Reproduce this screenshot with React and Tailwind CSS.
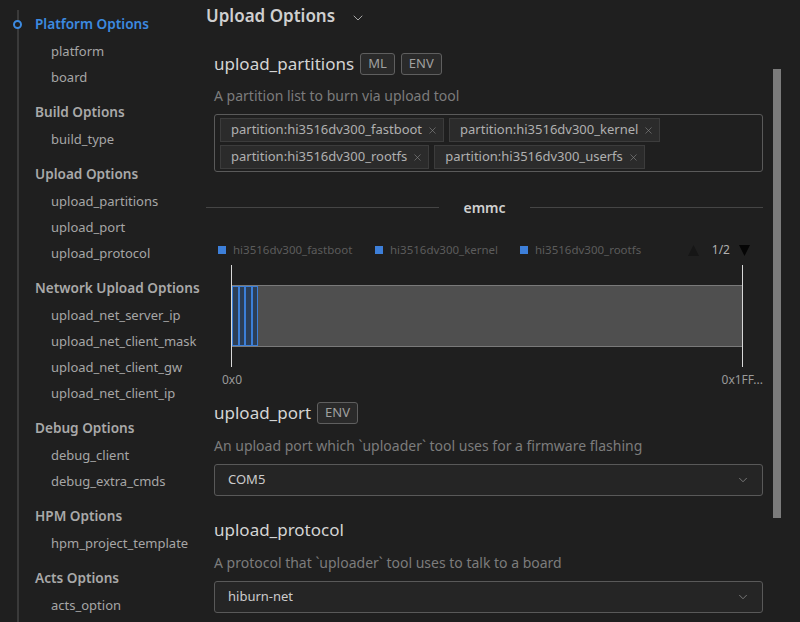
import React from "react";
import { ChevronDown, X } from "lucide-react";

const groups = [
  { title: "Platform Options", active: true, items: ["platform", "board"] },
  { title: "Build Options", items: ["build_type"] },
  { title: "Upload Options", items: ["upload_partitions", "upload_port", "upload_protocol"] },
  {
    title: "Network Upload Options",
    items: ["upload_net_server_ip", "upload_net_client_mask", "upload_net_client_gw", "upload_net_client_ip"],
  },
  { title: "Debug Options", items: ["debug_client", "debug_extra_cmds"] },
  { title: "HPM Options", items: ["hpm_project_template"] },
  { title: "Acts Options", items: ["acts_option"] },
];

const partitions = [
  ["partition:hi3516dv300_fastboot", "partition:hi3516dv300_kernel"],
  ["partition:hi3516dv300_rootfs", "partition:hi3516dv300_userfs"],
];

const legend = ["hi3516dv300_fastboot", "hi3516dv300_kernel", "hi3516dv300_rootfs"];

// Badge next to an option name
const Badge = ({ children }) => (
  <span className="h-[22px] px-[7px] flex items-center rounded-[3px] border border-[#5f5f5f] bg-[#2a2a2a] text-[13px] text-[#a0a0a0]">
    {children}
  </span>
);

const Select = ({ value }) => (
  <div className="h-[32px] flex items-center justify-between pl-[13px] pr-[12px] rounded-[3px] border border-[#595959] bg-[#252525] text-[13px] text-[#cccccc]">
    <span>{value}</span>
    <ChevronDown size={14} strokeWidth={1.2} className="text-[#9a9a9a]" />
  </div>
);

const Sidebar = () => (
  <aside className="w-[200px] shrink-0 relative pt-[10px]">
    <div className="absolute left-[17px] top-[10px] bottom-0 w-[2px] bg-[#3a3a3a]" />
    {groups.map((g) => (
      <div key={g.title} className="mb-[8px]">
        <div
          className={`h-[28px] flex items-center pl-[35px] text-[13.6px] font-semibold whitespace-nowrap relative ${
            g.active ? "text-[#3c8ae0]" : "text-[#a9a9a9]"
          }`}
        >
          {g.active && (
            <span className="absolute left-[13px] top-[10px] w-[9px] h-[9px] rounded-full border-2 border-[#3c8ae0] bg-[#1f1f1f]" />
          )}
          {g.title}
        </div>
        {g.items.map((it) => (
          <div key={it} className="h-[26px] flex items-center pl-[51px] pt-[1px] text-[13px] text-[#a6a6a6]">
            {it}
          </div>
        ))}
      </div>
    ))}
  </aside>
);

const Chart = () => (
  <div className="mt-[25px]">
    {/* divider */}
    <div className="flex items-center">
      <div className="flex-1 h-px bg-[#454545]" />
      <span className="px-[24px] text-[14px] font-semibold text-[#d0d0d0]">emmc</span>
      <div className="flex-1 h-px bg-[#454545]" />
    </div>
    {/* legend */}
    <div className="mt-[22px] h-[20px] flex items-center pl-[12px] pr-[13px] text-[11.5px] text-[#5c5c5c]">
      {legend.map((l, i) => (
        <div key={l} className={`flex items-center ${i === 0 ? "w-[157px]" : i === 1 ? "w-[145px]" : ""}`}>
          <span className="w-[8px] h-[8px] bg-[#3d7fd9] mr-[7px]" />
          {l}
        </div>
      ))}
      <div className="ml-auto flex items-center">
        <svg width="11" height="11" viewBox="0 0 11 11">
          <path d="M5.5 0 L11 11 L0 11 Z" fill="#161616" />
        </svg>
        <span className="ml-[13px] mr-[9px] text-[12px] text-[#b0b0b0]">1/2</span>
        <svg width="11" height="11" viewBox="0 0 11 11">
          <path d="M0 0 L11 0 L5.5 11 Z" fill="#050505" />
        </svg>
      </div>
    </div>
    {/* bar */}
    <div className="mt-[5px] ml-[25px] mr-[20px] h-[102px] border-x border-[#d8d8d8] flex items-center">
      <div className="w-full h-[62px] bg-[#4f4f4f] border-y border-[#7a7a7a] flex">
        {[0, 1, 2, 3].map((i) => (
          <div key={i} className="w-[6.5px] h-full bg-[#2c3e56] border border-[#3c7fd8]" />
        ))}
      </div>
    </div>
    <div className="mt-[4px] flex justify-between pl-[16px] text-[12px] text-[#9a9a9a]">
      <span>0x0</span>
      <span>0x1FF...</span>
    </div>
  </div>
);

export default function App() {
  return (
    <div
      className="w-[800px] h-[622px] bg-[#1f1f1f] flex overflow-hidden"
      style={{ fontFamily: '"Noto Sans", "Open Sans", sans-serif' }}
    >
      <Sidebar />
      <main className="flex-1 relative pl-[6px] pr-[37px]">
        {/* scrollbar */}
        <div className="absolute left-[573px] top-[69px] w-[8px] h-[449px] bg-[#7b7b7b]" />
        <div className="h-[32px] flex items-center text-[17px] font-semibold text-[#cfcfcf]">
          Upload Options
          <ChevronDown size={16} strokeWidth={1.3} className="ml-[15px] mt-[3px] text-[#bbbbbb]" />
        </div>

        <div className="pl-[8px]">
          {/* upload_partitions */}
          <div className="mt-[20px] h-[24px] flex items-center gap-[6px]">
            <span className="text-[17px] text-[#d4d4d4]">upload_partitions</span>
            <Badge>ML</Badge>
            <Badge>ENV</Badge>
          </div>
          <div className="mt-[10px] text-[14px] text-[#7c7c7c] leading-[20px]">A partition list to burn via upload tool</div>
          <div className="mt-[8px] h-[58px] rounded-[3px] border border-[#5a5a5a] pl-[5px] pt-[3px] flex flex-col gap-[3px]">
            {partitions.map((row, r) => (
              <div key={r} className="flex gap-[5px]">
                {row.map((p) => (
                  <span
                    key={p}
                    className="h-[24px] flex items-center pl-[10px] pr-[5px] bg-[#2b2b2b] border border-[#3c3c3c] text-[13px] text-[#b0b0b0]"
                  >
                    {p}
                    <X size={11} strokeWidth={1.3} className="ml-[5px] text-[#8a8a8a]" />
                  </span>
                ))}
              </div>
            ))}
          </div>
        </div>

        <Chart />

        <div className="pl-[8px]">
          {/* upload_port */}
          <div className="mt-[12px] h-[24px] flex items-center gap-[6px]">
            <span className="text-[17px] text-[#d4d4d4]">upload_port</span>
            <Badge>ENV</Badge>
          </div>
          <div className="mt-[11px] text-[14px] text-[#7c7c7c] leading-[20px]">
            An upload port which `uploader` tool uses for a firmware flashing
          </div>
          <div className="mt-[8px]">
            <Select value="COM5" />
          </div>

          {/* upload_protocol */}
          <div className="mt-[22px] h-[24px] flex items-center">
            <span className="text-[17px] text-[#d4d4d4]">upload_protocol</span>
          </div>
          <div className="mt-[11px] text-[14px] text-[#7c7c7c] leading-[20px]">
            A protocol that `uploader` tool uses to talk to a board
          </div>
          <div className="mt-[8px]">
            <Select value="hiburn-net" />
          </div>
        </div>
      </main>
    </div>
  );
}
